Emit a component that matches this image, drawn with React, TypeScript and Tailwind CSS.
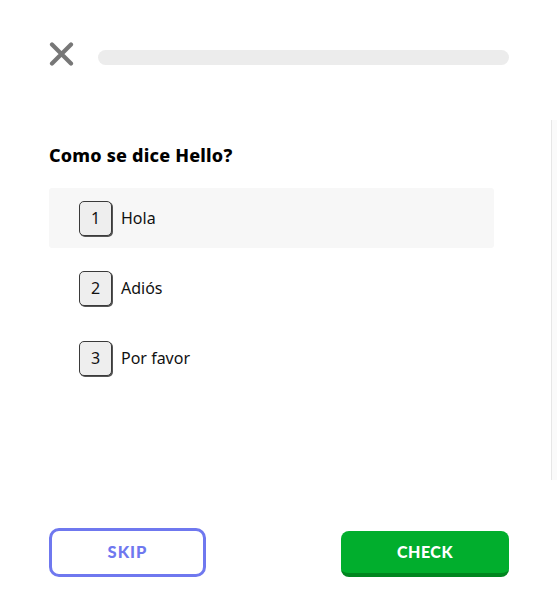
import React from "react";

const options = ["Hola", "Adiós", "Por favor"];

export default function App() {
  return (
    <div className="relative h-[609px] w-[557px] bg-white flex flex-col pl-[49px] pr-[48px] pt-[42px] pb-[32px] overflow-hidden">
      <div className="flex items-start gap-[24px]">
        <svg width="25" height="24" viewBox="0 0 25 24" className="shrink-0">
          <path d="M3 2.5 L22 21.5 M22 2.5 L3 21.5" stroke="#777777" strokeWidth="4.2" strokeLinecap="round" />
        </svg>
        <div className="mt-[8px] h-[15px] flex-1 rounded-full bg-[#ececec]" />
      </div>

      <h1 className="mt-[77px] text-[18px] leading-[24px] font-extrabold tracking-[0.2px] text-black" style={{ fontFamily: "'Noto Sans', sans-serif" }}>
        Como se dice Hello?
      </h1>

      <div className="mt-[21px] flex flex-col gap-[10px] w-[445px]" style={{ fontFamily: "'Noto Sans', sans-serif" }}>
        {options.map((o, i) => (
          <div
            key={o}
            className={`flex h-[60px] items-center pl-[30px] rounded-[3px] ${i === 0 ? "bg-[#f7f7f7]" : ""}`}
          >
            <div className="flex h-[35px] w-[33px] items-center justify-center rounded-[5px] border border-[#3a3a3a] bg-[#eeeeee] shadow-[1px_1px_0_#555] text-[16px] text-[#111]">
              {i + 1}
            </div>
            <span className="ml-[9px] text-[16px] text-[#111]">{o}</span>
          </div>
        ))}
      </div>

      <div className="flex-1" />

      <div className="flex items-end justify-between" style={{ fontFamily: "Lato, sans-serif" }}>
        <button className="h-[49px] w-[157px] rounded-[10px] border-[3px] border-[#6f78ef] bg-white text-[16.5px] font-black tracking-[1px] text-[#6f78ef]">
          SKIP
        </button>
        <button className="h-[46px] w-[168px] rounded-[8px] border-b-[4px] border-[#00861f] bg-[#01ae2d] text-[16px] font-black tracking-[0.5px] text-white">
          CHECK
        </button>
      </div>

      <div className="absolute left-[551px] top-[120px] h-[360px] w-[6px] border-l border-[#e6e6e6] bg-[#fafafa]" />
    </div>
  );
}
